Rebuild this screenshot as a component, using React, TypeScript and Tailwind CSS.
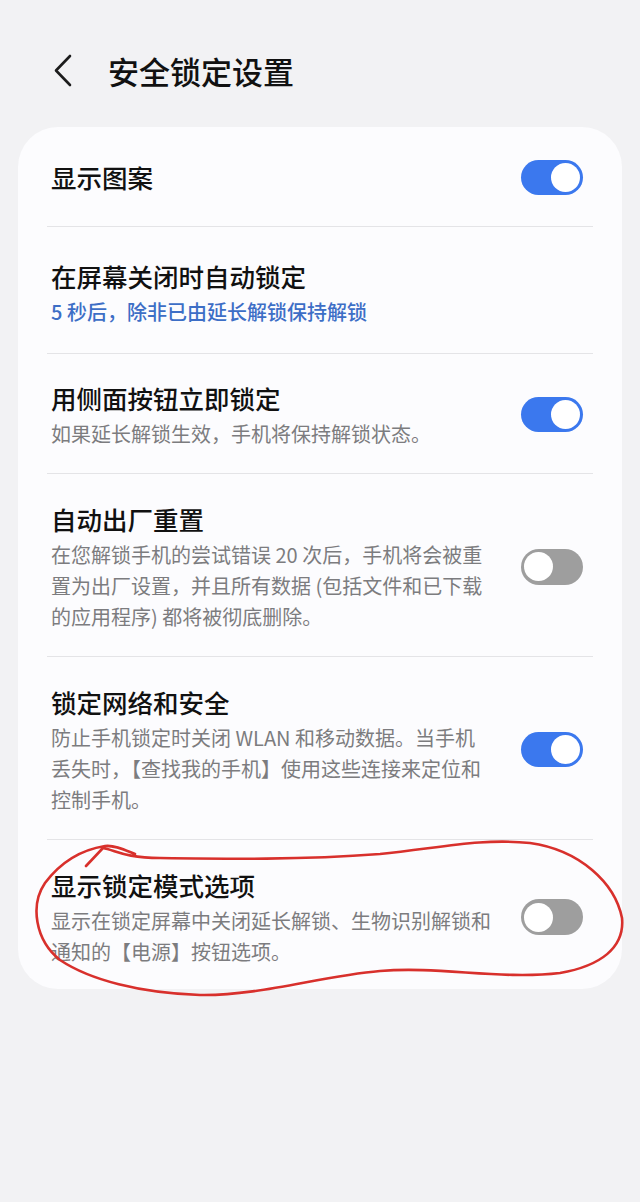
import React from 'react';

type Row = {
  title: string;
  sub?: string;
  subBlue?: boolean;
  on?: boolean;
  pad: string;
};

const rows: Row[] = [
  { title: '显示图案', on: true, pad: 'pt-[32px] pb-[31px]' },
  {
    title: '在屏幕关闭时自动锁定',
    sub: '5 秒后，除非已由延长解锁保持解锁',
    subBlue: true,
    pad: 'pt-[31px] pb-[26px]',
  },
  {
    title: '用侧面按钮立即锁定',
    sub: '如果延长解锁生效，手机将保持解锁状态。',
    on: true,
    pad: 'pt-[26px] pb-[24px]',
  },
  {
    title: '自动出厂重置',
    sub: '在您解锁手机的尝试错误 20 次后，手机将会被重置为出厂设置，并且所有数据 (包括文件和已下载的应用程序) 都将被彻底删除。',
    on: false,
    pad: 'pt-[27px] pb-[24px]',
  },
  {
    title: '锁定网络和安全',
    sub: '防止手机锁定时关闭 WLAN 和移动数据。当手机丢失时，【查找我的手机】使用这些连接来定位和控制手机。',
    on: true,
    pad: 'pt-[27px] pb-[24px]',
  },
  {
    title: '显示锁定模式选项',
    sub: '显示在锁定屏幕中关闭延长解锁、生物识别解锁和通知的【电源】按钮选项。',
    on: false,
    pad: 'pt-[27px] pb-[22px]',
  },
];

function Toggle({ on }: { on: boolean }) {
  return (
    <div
      className={
        on
          ? 'w-[62px] h-[35px] rounded-full bg-[#3b78ee] flex items-center justify-end pr-[3px] shrink-0'
          : 'w-[62px] h-[36px] rounded-full bg-[#9e9e9e] flex items-center justify-start pl-[3px] shrink-0'
      }
    >
      <div className="w-[29px] h-[29px] rounded-full bg-white" />
    </div>
  );
}

export default function App() {
  return (
    <div className="relative min-h-[1202px] bg-[#f2f2f4] font-['Noto_Sans_CJK_SC','Noto_Sans',sans-serif]">
      {/* header */}
      <div className="h-[127px] pt-[48px]">
        <div className="h-[44px] flex items-center pl-[53px]">
          <svg width="19" height="33" viewBox="0 0 19 33" fill="none">
            <path d="M17 2 L3 16.5 L17 31" stroke="#1c1c1c" strokeWidth="2.6" strokeLinecap="round" strokeLinejoin="round" />
          </svg>
          <h1 className="ml-[36px] text-[31px] font-medium text-[#111] leading-none">安全锁定设置</h1>
        </div>
      </div>

      {/* card */}
      <div className="mx-[18px] rounded-[40px] bg-[#fcfcfe]">
        <div className="mx-[29px]">
          {rows.map((row, i) => (
            <div
              key={i}
              className={
                'flex items-center pl-[4px] pr-[10px] ' +
                row.pad +
                (i < rows.length - 1 ? ' border-b border-[#e4e4e7]' : '')
              }
            >
              <div className="w-[443px]">
                <div className="text-[25.5px] leading-[36px] font-medium text-[#111]">{row.title}</div>
                {row.sub && (
                  <div
                    className={
                      row.subBlue
                        ? 'mt-[2px] text-[20px] leading-[31px] font-medium text-[#3d6ec6]'
                        : 'mt-[2px] text-[20px] leading-[31px] text-[#7c7c7f]'
                    }
                  >
                    {row.sub}
                  </div>
                )}
              </div>
              {row.on !== undefined && (
                <div className="ml-auto">
                  <Toggle on={row.on} />
                </div>
              )}
            </div>
          ))}
        </div>
      </div>

      {/* hand-drawn red circle annotation */}
      <svg
        className="absolute left-0 top-0 pointer-events-none"
        width="640"
        height="1202"
        viewBox="0 0 640 1202"
        fill="none"
      >
        <path
          d="M86 866 L103 848 C115 850 125 858 160 858 C230 859 300 860 380 854 C440 848 480 838 530 843 C580 850 615 883 622 918 C625 948 600 966 560 973 C500 980 440 966 380 971 C320 976 260 996 200 995 C140 993 90 980 60 960 C35 940 30 905 45 883 C60 863 80 850 105 846 C115 845 125 850 135 854"
          stroke="#d8302c"
          strokeWidth="2.6"
          strokeLinecap="round"
          strokeLinejoin="round"
        />
      </svg>
    </div>
  );
}
